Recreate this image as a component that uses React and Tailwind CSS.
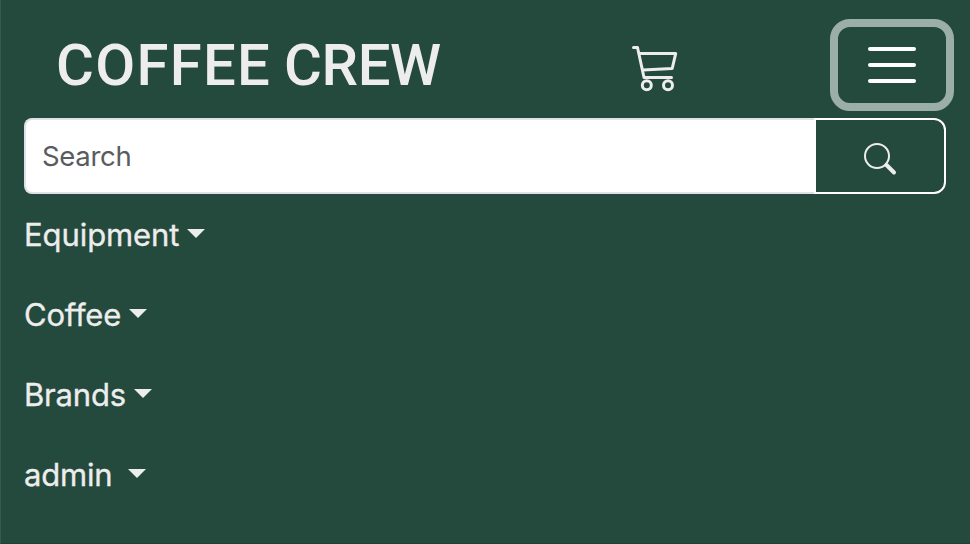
const links = [
  { label: "Equipment", style: "tracking-[-0.08px]", gap: "ml-2" },
  { label: "Coffee", style: "tracking-[-0.2px]", gap: "ml-2" },
  { label: "Brands", style: "tracking-[-0.2px]", gap: "ml-2" },
  { label: "admin", style: "tracking-[-0.2px]", gap: "ml-4" },
];

function CartIcon() {
  return (
    <svg className="h-12 w-12 shrink-0" viewBox="0 0 48 48" fill="none" stroke="#ededed" strokeWidth="3" strokeLinecap="round" strokeLinejoin="round">
      <path d="M2.5 3.5H6.5L13 33.5H40.5" />
      <path d="M8.5 9.5H44.7L41.2 24.5L12 26" />
      <circle cx="15.8" cy="41.3" r="4.5" />
      <circle cx="37" cy="41.3" r="4.5" />
    </svg>
  );
}

function SearchIcon() {
  return (
    <svg className="h-9 w-9" viewBox="0 0 36 36" fill="none" stroke="#ededed" strokeLinecap="round">
      <circle cx="15" cy="15" r="12" strokeWidth="2" />
      <path d="M24.5 24L32 31.5" strokeWidth="4" />
    </svg>
  );
}

export default function App() {
  return (
    <div className="h-[544px] w-[970px] overflow-hidden border-b border-l border-b-[#203f35] border-l-[#355a4e] bg-[#24493d] pr-6 pl-[23px] font-[Inter,sans-serif] text-[#ededed]">
      <header className="flex h-[118px] items-start pt-[19px]">
        <h1 className="mt-[11px] ml-[32px] w-[386px] shrink-0 font-[Roboto,sans-serif] text-[58px] leading-[70px] font-medium tracking-[-0.4px] whitespace-nowrap">
          <span className="tracking-[1.3px]">COFFEE</span>
          <span className="-ml-[1px]"> CREW</span>
        </h1>
        <div className="mt-[25px] ml-[189px]"><CartIcon /></div>
        <button className="-mr-2 ml-auto flex h-[92px] w-[124px] shrink-0 flex-col items-center justify-center gap-3 rounded-[20px] border-8 border-[#9baea7]" aria-label="Menu">
          <span className="h-1 w-12 rounded-full bg-white" />
          <span className="h-1 w-12 rounded-full bg-white" />
          <span className="h-1 w-12 rounded-full bg-white" />
        </button>
      </header>
      <form className="flex h-[76px] w-[922px]">
        <input className="w-[790px] rounded-l-[8px] border-2 border-r-0 border-[#dee2e6] bg-white pt-[1px] pl-4 text-[27.5px] tracking-[-0.3px] text-[#595c5f] placeholder:text-[#595c5f] placeholder:opacity-100" placeholder="Search" />
        <button className="flex w-[132px] items-center justify-center rounded-r-[12px] border-2 border-white pt-1.5" type="button" aria-label="Submit">
          <SearchIcon />
        </button>
      </form>
      <nav className="flex flex-col pt-px">
        {links.map(({ label, style, gap }) => (
          <a key={label} className="flex h-20 items-center text-[31px] leading-[48px] [-webkit-text-stroke:0.35px_#ededed]">
            <span className={style}>{label}</span>
            <span className={`${gap} -mt-[3px] border-x-[9px] border-t-[9px] border-x-transparent border-t-[#ededed]`} />
          </a>
        ))}
      </nav>
    </div>
  );
}
